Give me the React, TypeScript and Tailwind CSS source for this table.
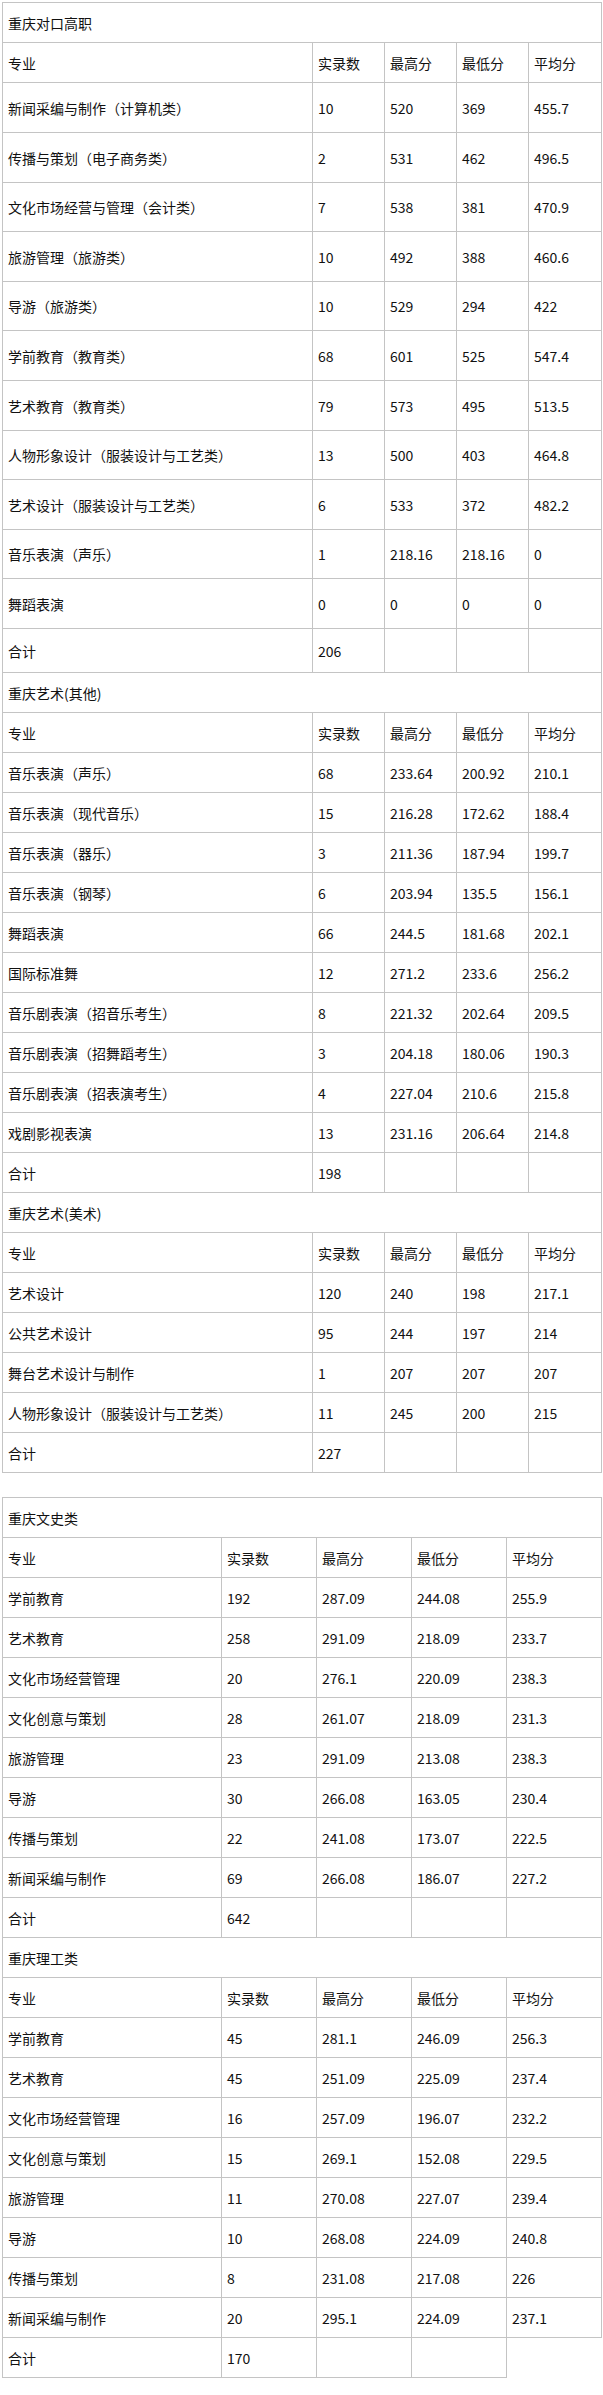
import React from "react";

type Row = [string, string, string, string, string];

const sec1: Row[] = [
  ["新闻采编与制作（计算机类）", "10", "520", "369", "455.7"],
  ["传播与策划（电子商务类）", "2", "531", "462", "496.5"],
  ["文化市场经营与管理（会计类）", "7", "538", "381", "470.9"],
  ["旅游管理（旅游类）", "10", "492", "388", "460.6"],
  ["导游（旅游类）", "10", "529", "294", "422"],
  ["学前教育（教育类）", "68", "601", "525", "547.4"],
  ["艺术教育（教育类）", "79", "573", "495", "513.5"],
  ["人物形象设计（服装设计与工艺类）", "13", "500", "403", "464.8"],
  ["艺术设计（服装设计与工艺类）", "6", "533", "372", "482.2"],
  ["音乐表演（声乐）", "1", "218.16", "218.16", "0"],
  ["舞蹈表演", "0", "0", "0", "0"],
];

const sec2: Row[] = [
  ["音乐表演（声乐）", "68", "233.64", "200.92", "210.1"],
  ["音乐表演（现代音乐）", "15", "216.28", "172.62", "188.4"],
  ["音乐表演（器乐）", "3", "211.36", "187.94", "199.7"],
  ["音乐表演（钢琴）", "6", "203.94", "135.5", "156.1"],
  ["舞蹈表演", "66", "244.5", "181.68", "202.1"],
  ["国际标准舞", "12", "271.2", "233.6", "256.2"],
  ["音乐剧表演（招音乐考生）", "8", "221.32", "202.64", "209.5"],
  ["音乐剧表演（招舞蹈考生）", "3", "204.18", "180.06", "190.3"],
  ["音乐剧表演（招表演考生）", "4", "227.04", "210.6", "215.8"],
  ["戏剧影视表演", "13", "231.16", "206.64", "214.8"],
];

const sec3: Row[] = [
  ["艺术设计", "120", "240", "198", "217.1"],
  ["公共艺术设计", "95", "244", "197", "214"],
  ["舞台艺术设计与制作", "1", "207", "207", "207"],
  ["人物形象设计（服装设计与工艺类）", "11", "245", "200", "215"],
];

const wenshi: Row[] = [
  ["学前教育", "192", "287.09", "244.08", "255.9"],
  ["艺术教育", "258", "291.09", "218.09", "233.7"],
  ["文化市场经营管理", "20", "276.1", "220.09", "238.3"],
  ["文化创意与策划", "28", "261.07", "218.09", "231.3"],
  ["旅游管理", "23", "291.09", "213.08", "238.3"],
  ["导游", "30", "266.08", "163.05", "230.4"],
  ["传播与策划", "22", "241.08", "173.07", "222.5"],
  ["新闻采编与制作", "69", "266.08", "186.07", "227.2"],
];

const ligong: Row[] = [
  ["学前教育", "45", "281.1", "246.09", "256.3"],
  ["艺术教育", "45", "251.09", "225.09", "237.4"],
  ["文化市场经营管理", "16", "257.09", "196.07", "232.2"],
  ["文化创意与策划", "15", "269.1", "152.08", "229.5"],
  ["旅游管理", "11", "270.08", "227.07", "239.4"],
  ["导游", "10", "268.08", "224.09", "240.8"],
  ["传播与策划", "8", "231.08", "217.08", "226"],
  ["新闻采编与制作", "20", "295.1", "224.09", "237.1"],
];

const header: Row = ["专业", "实录数", "最高分", "最低分", "平均分"];

const cell =
  "border-r border-b border-[#c4c4c4] pl-[5px] flex items-center whitespace-nowrap overflow-hidden";

function GridRow({
  cells,
  cols,
  h,
}: {
  cells: string[];
  cols: string;
  h: string;
}) {
  return (
    <div className={`grid ${cols} ${h}`}>
      {cells.map((c, i) => (
        <div key={i} className={cell}>
          {c}
        </div>
      ))}
    </div>
  );
}

function Title({ text }: { text: string }) {
  return <div className={`${cell} h-[40px]`}>{text}</div>;
}

const cols1 = "grid-cols-[310px_72px_72px_72px_73px]";
const cols2 = "grid-cols-[219px_95px_95px_95px_95px]";

export default function App() {
  const sec1Heights = [
    "h-[50px]",
    "h-[50px]",
    "h-[49px]",
    "h-[50px]",
    "h-[49px]",
    "h-[50px]",
    "h-[50px]",
    "h-[49px]",
    "h-[50px]",
    "h-[49px]",
    "h-[50px]",
  ];
  return (
    <div className="w-[603px] h-[2395px] bg-white text-[#111] text-[14px] leading-none font-['Noto_Sans_CJK_SC',sans-serif] pt-[2px] pl-[2px]">
      {/* Table 1 */}
      <div className="w-[600px] border-l border-t border-[#c4c4c4]">
        <Title text="重庆对口高职" />
        <GridRow cells={header} cols={cols1} h="h-[40px]" />
        {sec1.map((r, i) => (
          <GridRow key={i} cells={r} cols={cols1} h={sec1Heights[i]} />
        ))}
        <GridRow cells={["合计", "206", "", "", ""]} cols={cols1} h="h-[44px]" />

        <Title text="重庆艺术(其他)" />
        <GridRow cells={header} cols={cols1} h="h-[40px]" />
        {sec2.map((r, i) => (
          <GridRow key={i} cells={r} cols={cols1} h="h-[40px]" />
        ))}
        <GridRow cells={["合计", "198", "", "", ""]} cols={cols1} h="h-[40px]" />

        <Title text="重庆艺术(美术)" />
        <GridRow cells={header} cols={cols1} h="h-[40px]" />
        {sec3.map((r, i) => (
          <GridRow key={i} cells={r} cols={cols1} h="h-[40px]" />
        ))}
        <GridRow cells={["合计", "227", "", "", ""]} cols={cols1} h="h-[40px]" />
      </div>

      {/* Table 2 */}
      <div className="mt-[24px] w-[600px] border-l border-t border-[#c4c4c4]">
        <Title text="重庆文史类" />
        <GridRow cells={header} cols={cols2} h="h-[40px]" />
        {wenshi.map((r, i) => (
          <GridRow key={i} cells={r} cols={cols2} h="h-[40px]" />
        ))}
        <GridRow cells={["合计", "642", "", "", ""]} cols={cols2} h="h-[40px]" />

        <Title text="重庆理工类" />
        <GridRow cells={header} cols={cols2} h="h-[40px]" />
        {ligong.map((r, i) => (
          <GridRow key={i} cells={r} cols={cols2} h="h-[40px]" />
        ))}
        <GridRow cells={["合计", "170", "", ""]} cols={cols2} h="h-[40px]" />
      </div>
    </div>
  );
}
